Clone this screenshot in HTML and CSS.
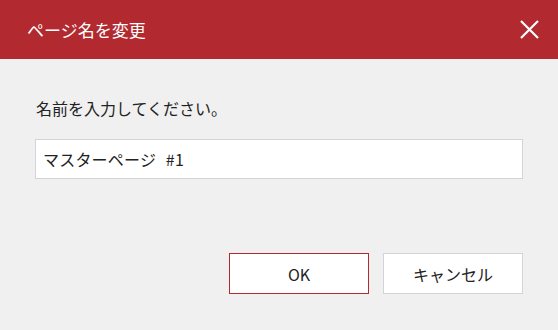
FILE: index.html
```html
<!DOCTYPE html>
<html lang="ja">
<head>
<meta charset="utf-8">
<link rel="stylesheet" href="styles.css">
</head>
<body>
<div class="dialog">
  <div class="header">
    <span class="title">ページ名を変更</span>
    <button class="close" aria-label="閉じる">
      <svg width="19" height="19" viewBox="0 0 19 19"><path d="M1 1L18 18M18 1L1 18" stroke="#fff" stroke-width="2.2" fill="none"/></svg>
    </button>
  </div>
  <div class="content">
    <div class="label">名前を入力してください。</div>
    <div class="input">マスターページ #1</div>
    <div class="actions">
      <button class="btn btn-ok">OK</button>
      <button class="btn">キャンセル</button>
    </div>
  </div>
</div>
</body>
</html>
```

FILE: styles.css
```css
html, body {
  margin: 0;
  padding: 0;
  background: #f0f0f0;
}
.dialog {
  width: 558px;
  height: 330px;
  background: #f0f0f0;
  font-family: "Noto Sans CJK JP", "Noto Sans", sans-serif;
  color: #222;
}
.header {
  height: 59px;
  background: #b22a2f;
  display: flex;
  align-items: center;
  justify-content: space-between;
  padding: 0 19px 0 27px;
  box-sizing: border-box;
}
.title {
  color: #fff;
  font-size: 17px;
  line-height: 24px;
}
.close {
  border: 0;
  background: none;
  padding: 0;
  width: 19px;
  height: 19px;
  display: flex;
  cursor: pointer;
}
.content {
  padding: 37px 35px 0 35px;
}
.label {
  font-size: 16px;
  line-height: 24px;
  padding-left: 1px;
}
.input {
  margin-top: 19px;
  height: 40px;
  box-sizing: border-box;
  border: 1px solid #d3d3d9;
  background: #fff;
  font-size: 16px;
  line-height: 38px;
  padding-left: 7px;
  word-spacing: 6px;
  letter-spacing: 0.2px;
}
.actions {
  margin-top: 74px;
  display: flex;
  justify-content: flex-end;
  gap: 14px;
}
.btn {
  width: 140px;
  height: 41px;
  box-sizing: border-box;
  border: 1px solid #d3d3d9;
  background: #fff;
  font-family: inherit;
  font-size: 16px;
  color: #222;
  padding: 0;
}
.btn-ok {
  border-color: #b22a2f;
}
```
